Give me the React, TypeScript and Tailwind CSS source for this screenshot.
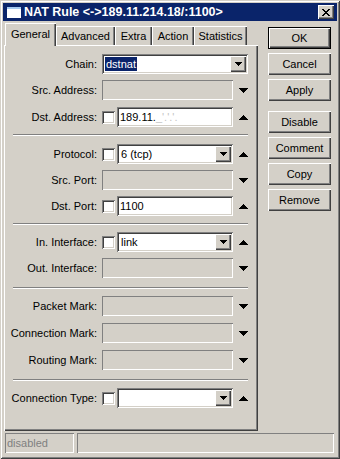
import React from 'react';

// classic win2k bevels
const raised =
  'shadow-[inset_1px_1px_0_#ffffff,inset_-1px_-1px_0_#404040,inset_-2px_-2px_0_#808080]';
const sunken =
  'shadow-[inset_1px_1px_0_#808080,inset_-1px_-1px_0_#ffffff,inset_2px_2px_0_#404040,inset_-2px_-2px_0_#d4d0c8]';
const flat = 'shadow-[inset_1px_1px_0_#808080,inset_-1px_-1px_0_#ffffff]';

function Arrow({ up }: { up?: boolean }) {
  const d = up
    ? 'M4 0h1v1H4zM3 1h3v1H3zM2 2h5v1H2zM1 3h7v1H1zM0 4h9v1H0z'
    : 'M0 0h9v1H0zM1 1h7v1H1zM2 2h5v1H2zM3 3h3v1H3zM4 4h1v1H4z';
  return (
    <svg width="9" height="5" viewBox="0 0 9 5" className="ml-[6px] shrink-0">
      <path d={d} fill="#000" />
    </svg>
  );
}

function DropButton() {
  return (
    <div className={`absolute right-[2px] top-[2px] flex h-[16px] w-[16px] items-center justify-center bg-[#d4d0c8] ${raised}`}>
      <svg width="7" height="4" viewBox="0 0 7 4">
        <path d="M0 0h7v1H0zM1 1h5v1H1zM2 2h3v1H2zM3 3h1v1H3z" fill="#000" />
      </svg>
    </div>
  );
}

function Check() {
  return <div className={`h-[13px] w-[13px] shrink-0 bg-white ${sunken}`} />;
}

function Row({ label, className = '', children }: { label: string; className?: string; children: React.ReactNode }) {
  return (
    <div className={`flex h-[20px] items-center ${className}`}>
      <div className="w-[92px] whitespace-nowrap text-right">{label}</div>
      <div className="ml-[5px] flex h-[20px] w-[146px] items-center">{children}</div>
    </div>
  );
}

function Empty({ label, className }: { label: string; className?: string }) {
  return (
    <Row label={label} className={className}>
      <div className={`h-[20px] w-[131px] bg-[#d4d0c8] ${flat}`} />
      <Arrow />
    </Row>
  );
}

function Sep({ className }: { className: string }) {
  return <div className={`ml-[8px] h-[2px] w-[235px] border-t border-b border-t-[#808080] border-b-white ${className}`} />;
}

function Btn({ label, def, className = '' }: { label: string; def?: boolean; className?: string }) {
  return (
    <div className={`h-[22px] w-[63px] bg-[#d4d0c8] ${def ? 'border border-black' : ''} ${className}`}>
      <div className={`flex h-full w-full items-center justify-center ${raised}`}>{label}</div>
    </div>
  );
}

export default function App() {
  const tabs = [
    { name: 'Advanced', w: 'w-[59px]' },
    { name: 'Extra', w: 'w-[37px]' },
    { name: 'Action', w: 'w-[42px]' },
    { name: 'Statistics', w: 'w-[53px]' },
  ];

  return (
    <div className="h-[459px] w-[340px] overflow-hidden bg-[#d4d0c8] font-['Liberation_Sans',Arial,sans-serif] text-[11px] text-black">
      <div className="h-full w-full p-[3px] shadow-[inset_1px_1px_0_#d4d0c8,inset_-1px_-1px_0_#404040,inset_2px_2px_0_#ffffff,inset_-2px_-2px_0_#808080]">
        {/* Title bar */}
        <div className="flex h-[18px] items-center bg-[#0a246a]">
          <div className="ml-[4px] h-[11px] w-[14px] border-t-2 border-[#a6caf0] bg-white" />
          <div className="ml-[3px] text-[12.5px] font-bold whitespace-nowrap text-white">
            NAT Rule &lt;-&gt;189.11.214.18/:1100&gt;
          </div>
          <div className={`ml-auto mr-[3px] flex h-[14px] w-[16px] items-center justify-center bg-[#d4d0c8] ${raised}`}>
            <svg width="8" height="7" viewBox="0 0 8 7">
              <path
                d="M0 0h2v1H0zM6 0h2v1H6zM1 1h2v1H1zM5 1h2v1H5zM2 2h4v1H2zM3 3h2v1H3zM2 4h4v1H2zM1 5h2v1H1zM5 5h2v1H5zM0 6h2v1H0zM6 6h2v1H6z"
                fill="#000"
              />
            </svg>
          </div>
        </div>

        <div className="flex pl-[1px]">
          {/* Tabs + page */}
          <div className="flex w-[254px] flex-col">
            <div className="flex h-[24px] items-end">
              <div className="relative z-10 mb-[-1px] ml-[1px] flex h-[23px] w-[51px] items-center justify-center bg-[#d4d0c8] shadow-[inset_1px_1px_0_#ffffff,inset_-1px_0_0_#404040,inset_-2px_0_0_#808080]">
                General
              </div>
              {tabs.map((t) => (
                <div
                  key={t.name}
                  className={`flex h-[19px] items-center justify-center pt-[2px] shadow-[inset_1px_1px_0_#ffffff,inset_-1px_0_0_#404040,inset_-2px_0_0_#808080] ${t.w}`}
                >
                  {t.name}
                </div>
              ))}
            </div>

            <div className="h-[386px] pt-[9px] pl-[1px] shadow-[inset_1px_1px_0_#ffffff,inset_-1px_-1px_0_#404040,inset_-2px_-2px_0_#808080]">
              <Row label="Chain:">
                <div className={`relative h-[20px] w-[146px] bg-white ${sunken}`}>
                  <span className="absolute left-[3px] top-[3px] bg-[#0a246a] px-[1px] leading-[14px] text-white">dstnat</span>
                  <DropButton />
                </div>
              </Row>
              <Empty label="Src. Address:" className="mt-[6px]" />
              <Row label="Dst. Address:" className="mt-[7px]">
                <Check />
                <div className={`ml-[2px] flex h-[20px] w-[116px] items-center bg-white pl-[3px] ${sunken}`}>
                  189.11.<span className="text-[#c4c4c4]">_'.'.'.</span>
                </div>
                <Arrow up />
              </Row>

              <Sep className="mt-[7px]" />

              <Row label="Protocol:" className="mt-[8px]">
                <Check />
                <div className={`relative ml-[2px] flex h-[20px] w-[116px] items-center bg-white pl-[4px] ${sunken}`}>
                  6 (tcp)
                  <DropButton />
                </div>
                <Arrow up />
              </Row>
              <Empty label="Src. Port:" className="mt-[6px]" />
              <Row label="Dst. Port:" className="mt-[6px]">
                <Check />
                <div className={`ml-[2px] flex h-[20px] w-[116px] items-center bg-white pl-[3px] ${sunken}`}>1100</div>
                <Arrow up />
              </Row>

              <Sep className="mt-[7px]" />

              <Row label="In. Interface:" className="mt-[7px]">
                <Check />
                <div className={`relative ml-[2px] flex h-[20px] w-[116px] items-center bg-white pl-[4px] ${sunken}`}>
                  link
                  <DropButton />
                </div>
                <Arrow up />
              </Row>
              <Empty label="Out. Interface:" className="mt-[6px]" />

              <Sep className="mt-[9px]" />

              <Empty label="Packet Mark:" className="mt-[7px]" />
              <Empty label="Connection Mark:" className="mt-[7px]" />
              <Empty label="Routing Mark:" className="mt-[7px]" />

              <Sep className="mt-[9px]" />

              <Row label="Connection Type:" className="mt-[7px]">
                <Check />
                <div className={`relative ml-[2px] h-[20px] w-[116px] bg-white ${sunken}`}>
                  <DropButton />
                </div>
                <Arrow up />
              </Row>
            </div>
          </div>

          {/* Buttons */}
          <div className="ml-[10px] flex flex-col gap-[4px] pt-[6px]">
            <Btn label="OK" def />
            <Btn label="Cancel" />
            <Btn label="Apply" />
            <Btn label="Disable" className="mt-[6px]" />
            <Btn label="Comment" />
            <Btn label="Copy" />
            <Btn label="Remove" />
          </div>
        </div>

        {/* Status bar */}
        <div className="mt-[2px] flex gap-[3px] pl-[2px]">
          <div className={`flex h-[20px] w-[69px] items-center pl-[2px] text-[#808080] ${flat}`}>disabled</div>
          <div className={`h-[20px] w-[257px] ${flat}`} />
        </div>
      </div>
    </div>
  );
}
